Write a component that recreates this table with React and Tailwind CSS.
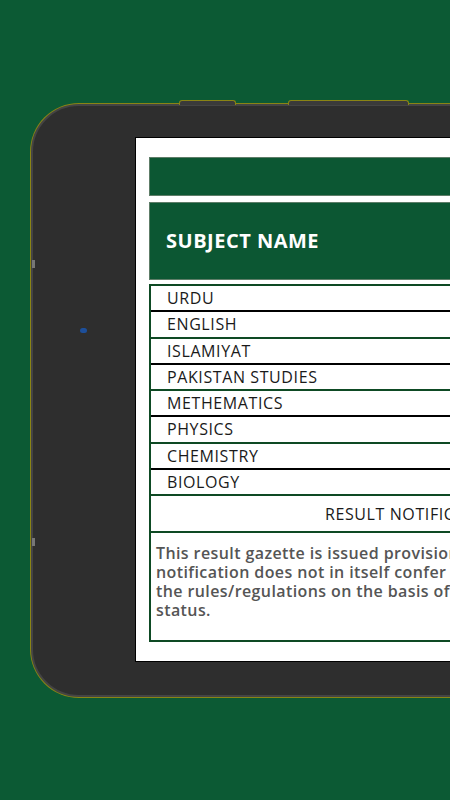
import React from "react";

const subjects = [
  "URDU",
  "ENGLISH",
  "ISLAMIYAT",
  "PAKISTAN STUDIES",
  "METHEMATICS",
  "PHYSICS",
  "CHEMISTRY",
  "BIOLOGY",
];

const notice = [
  "This result gazette is issued provisionally, errors and omissions excepted. This",
  "notification does not in itself confer any right or privilege upon a candidate under",
  "the rules/regulations on the basis of which the candidate is declared a pass",
  "status.",
];

const App = () => {
  return (
    <div className="relative w-[450px] h-[800px] overflow-hidden bg-[#0c5a34] pt-[104px] pl-[31px] font-['Open_Sans',sans-serif]">
      {/* TABLET BODY */}
      <div className="relative w-[900px] h-[593px] rounded-l-[48px] bg-[#2e2e2e] border-2 border-[#444] shadow-[0_0_0_1px_#8a8414]">
        {/* top hardware buttons */}
        <div className="absolute -top-[6px] left-[146px] w-[57px] h-[5px] rounded-t-[3px] bg-[#3a3a3a] border-t border-x border-[#8a8414]" />
        <div className="absolute -top-[6px] left-[255px] w-[121px] h-[5px] rounded-t-[3px] bg-[#3a3a3a] border-t border-x border-[#8a8414]" />
        {/* left side marks */}
        <div className="absolute -left-[1px] top-[154px] w-[3px] h-[8px] bg-[#777]" />
        <div className="absolute -left-[1px] top-[432px] w-[3px] h-[8px] bg-[#777]" />
        {/* camera */}
        <div className="absolute left-[47px] top-[222px] w-[7px] h-[5px] rounded-full bg-[#1d4f9a]" />

        {/* SCREEN */}
        <div className="ml-[102px] mt-[31px] w-[720px] h-[525px] bg-white border border-black px-[13px] pt-[19px] flex flex-col">
          {/* top green bar */}
          <div className="h-[39px] bg-[#0c5733] border border-[#5e7d68]" />

          {/* header */}
          <div className="mt-[6px] h-[78px] bg-[#0c5733] border border-[#5e7d68] flex items-center pl-[16px]">
            <span className="text-white font-bold text-[20px] tracking-[0.5px]">SUBJECT NAME</span>
          </div>

          {/* subject rows */}
          <div className="mt-[4px] border-x-2 border-[#0e4a24] flex flex-col">
            {subjects.map((s, i) => (
              <div
                key={s}
                className={`h-[26.25px] flex items-center pl-[16px] text-[16px] text-[#1a1a1a] tracking-[0.6px] border-t-2 ${
                  i % 2 === 0 ? "border-[#0e4a24]" : "border-black"
                }`}
              >
                {s}
              </div>
            ))}
            <div className="h-[37px] border-t-2 border-[#0e4a24] flex items-center pl-[174px] text-[16px] text-[#1a1a1a] tracking-[0.6px] whitespace-nowrap">
              RESULT NOTIFICATION
            </div>
            <div className="h-[111px] border-y-2 border-[#0e4a24] pl-[5px] pt-[11px] text-[16px] leading-[19px] font-semibold text-[#555] tracking-[0.4px] flex flex-col">
              {notice.map((l) => (
                <div key={l} className="whitespace-nowrap">
                  {l}
                </div>
              ))}
            </div>
          </div>
        </div>
      </div>
    </div>
  );
};

export default App;
